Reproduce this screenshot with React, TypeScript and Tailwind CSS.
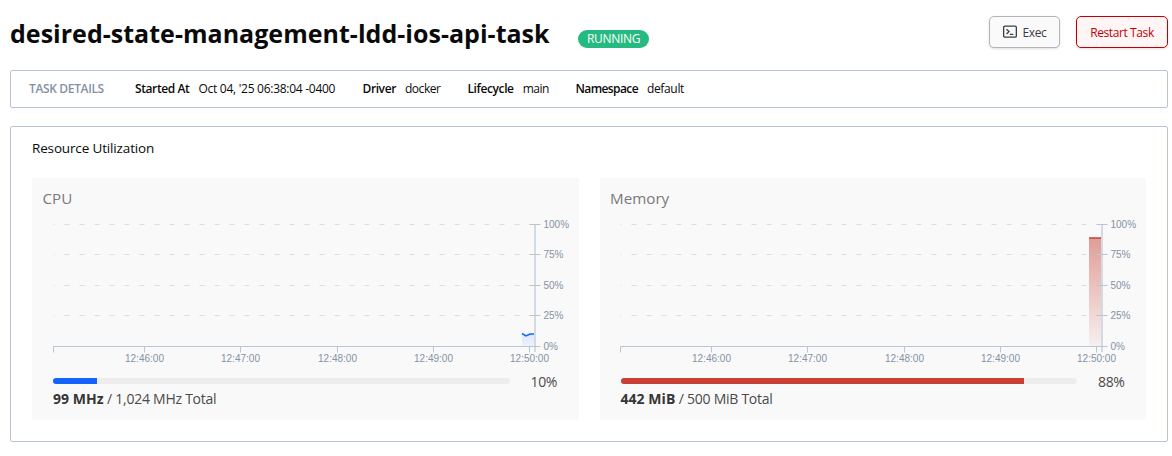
import React from 'react';

const GRID_Y = [0.5, 30.5, 61.5, 91.5];
const LEVELS: [string, number][] = [['100%', 0.5], ['75%', 30.5], ['50%', 61.5], ['25%', 91.5], ['0%', 122.5]];
const TIMES: [string, number][] = [['12:46:00', 91.5], ['12:47:00', 187.5], ['12:48:00', 284.5], ['12:49:00', 380.5], ['12:50:00', 476.5]];

type MetricProps = {
  title: string;
  id: string;
  color: string;
  topOpacity: number;
  line: string;
  area: string;
  chartMargin: string;
  percent: string;
  barWidth: number;
  used: string;
  total: string;
};

function Metric({ title, id, color, topOpacity, line, area, chartMargin, percent, barWidth, used, total }: MetricProps) {
  return (
    <section className="h-[242px] flex-1 rounded-[2px] bg-[#f9f9f9]">
      <h3 className="h-[36px] pl-[10.5px] pt-[8px] text-[15.2px] leading-[24px] text-[#7a7a7a]">{title}</h3>
      <svg className={`mt-[10px] block h-[145px] w-[522px] overflow-visible ${chartMargin}`} viewBox="0 0 522 145">
        <defs>
          <linearGradient id={id} x1="0" x2="0" y1="0" y2="1">
            <stop offset="0" stopColor={color} stopOpacity={topOpacity} />
            <stop offset="1" stopColor={color} stopOpacity="0.05" />
          </linearGradient>
        </defs>
        <g stroke="#d8dde6" strokeDasharray="5 10">
          {GRID_Y.map((y) => <path key={y} d={`M481.5 ${y}H0.5`} />)}
        </g>
        <path d={area} fill={`url(#${id})`} />
        <path d={line} fill="none" stroke={color} strokeWidth="1.5" />
        <path d="M482 0V128" stroke="#d3dae4" strokeWidth="2" />
        <g fill="none" stroke="#bac5d3">
          <path d="M0.5 128.5V122.5H481.5" />
          {LEVELS.map(([l, y]) => <path key={l} d={`M476.5 ${y}h11`} />)}
          {TIMES.map(([l, x]) => <path key={l} d={`M${x} 122.5v6`} />)}
        </g>
        <g fill="#8492a6" className="font-['Liberation_Sans',sans-serif] text-[10px]">
          {LEVELS.map(([l, y]) => <text key={l} x="490.5" y={y + 3.5}>{l}</text>)}
          {TIMES.map(([l, x]) => <text key={l} x={x} y="138" textAnchor="middle">{l}</text>)}
        </g>
      </svg>
      <div className="ml-[21px] mt-[4px] flex h-[16px] items-center">
        <div className="h-[6px] w-[456.5px] overflow-hidden rounded-full bg-[#ededed]">
          <div className="h-full" style={{ width: barWidth, backgroundColor: color }} />
        </div>
        <span className="w-[47.5px] text-right text-[14px] tracking-[-0.4px] text-[#4a4a4a]">{percent}</span>
      </div>
      <p className="ml-[21px] text-[14px] leading-[20px] tracking-[-0.26px] text-[#4a4a4a]">
        <strong className="font-bold tracking-[0.05px] text-[#363636]">{used}</strong> / {total}
      </p>
    </section>
  );
}

function Detail({ term, value, className }: { term: string; value: string; className: string }) {
  return (
    <span className={`flex gap-[9px] ${className}`}>
      <span className="font-semibold tracking-[-0.4px]">{term}</span>
      <span>{value}</span>
    </span>
  );
}

export default function App() {
  return (
    <main className="h-[456px] w-[1172px] overflow-hidden bg-white pl-[10px] pr-[4px] font-['Open_Sans','Noto_Sans',sans-serif] text-[#0a0a0a]">
      <header className="flex h-[70px] items-start pt-[16px]">
        <h1 className="w-[568px] whitespace-nowrap text-[25px] font-bold leading-[34px] tracking-[0.02px]">desired-state-management-ldd-ios-api-task</h1>
        <span className="mt-[14px] h-[18px] w-[71px] rounded-full bg-[#25ba81] text-center text-[12px] leading-[18px] tracking-[-0.3px] text-white">RUNNING</span>
        <button className="ml-auto flex h-[32px] w-[71px] items-center justify-center gap-[6px] rounded-[5px] border border-[#b3b3b8] bg-[#fafafa] text-[12px] tracking-[-0.4px] text-[#3b3d45] shadow-sm">
          <svg className="h-[14px] w-[14px]" viewBox="0 0 14 14" fill="none" stroke="currentColor">
            <rect x="0.65" y="1.15" width="12.7" height="11" rx="1.2" strokeWidth="1.3" />
            <path d="M3.5 4.2 6 6.6 3.5 9M6.9 9.3h3.4" strokeWidth="1.3" />
          </svg>
          <span className="pt-px">Exec</span>
        </button>
        <button className="ml-[16px] h-[32px] w-[92px] rounded-[5px] border border-[#c00005] bg-[#fff5f5] pt-px text-[12px] tracking-[-0.4px] text-[#c00005] shadow-sm">Restart Task</button>
      </header>
      <section className="flex h-[38px] items-center rounded-[2px] border border-[#bac5d3] pl-[18px] text-[12px] tracking-[-0.27px] whitespace-nowrap">
        <span className="w-[106px] font-semibold tracking-[-0.35px] text-[#8492a6]">TASK DETAILS</span>
        <Detail term="Started At" value="Oct 04, '25 06:38:04 -0400" className="w-[227.5px]" />
        <Detail term="Driver" value="docker" className="w-[105px] tracking-[-0.45px]" />
        <Detail term="Lifecycle" value="main" className="w-[108px] tracking-[-0.5px]" />
        <Detail term="Namespace" value="default" className="tracking-[-0.35px] [&>span:first-child]:tracking-[-0.6px]" />
      </section>
      <section className="mt-[18px] h-[316px] rounded-[2px] border border-[#bac5d3] px-[21px]">
        <h2 className="h-[51px] pt-[11px] text-[13.5px] leading-[20px] tracking-[-0.15px]">Resource Utilization</h2>
        <div className="flex gap-[21px]">
          <Metric title="CPU" id="cpu-fill" color="#1563ff" topOpacity={0.12} line="M469 109.5L473 112L477 110H481" area="M469 109.5L473 112L477 110H481V122H469Z" chartMargin="ml-[21px]" percent="10%" barWidth={44} used="99 MHz" total="1,024 MHz Total" />
          <Metric title="Memory" id="memory-fill" color="#c84034" topOpacity={0.5} line="M469 14H481" area="M469 14H481V122H469Z" chartMargin="ml-[20.5px]" percent="88%" barWidth={403} used="442 MiB" total="500 MiB Total" />
        </div>
      </section>
    </main>
  );
}
